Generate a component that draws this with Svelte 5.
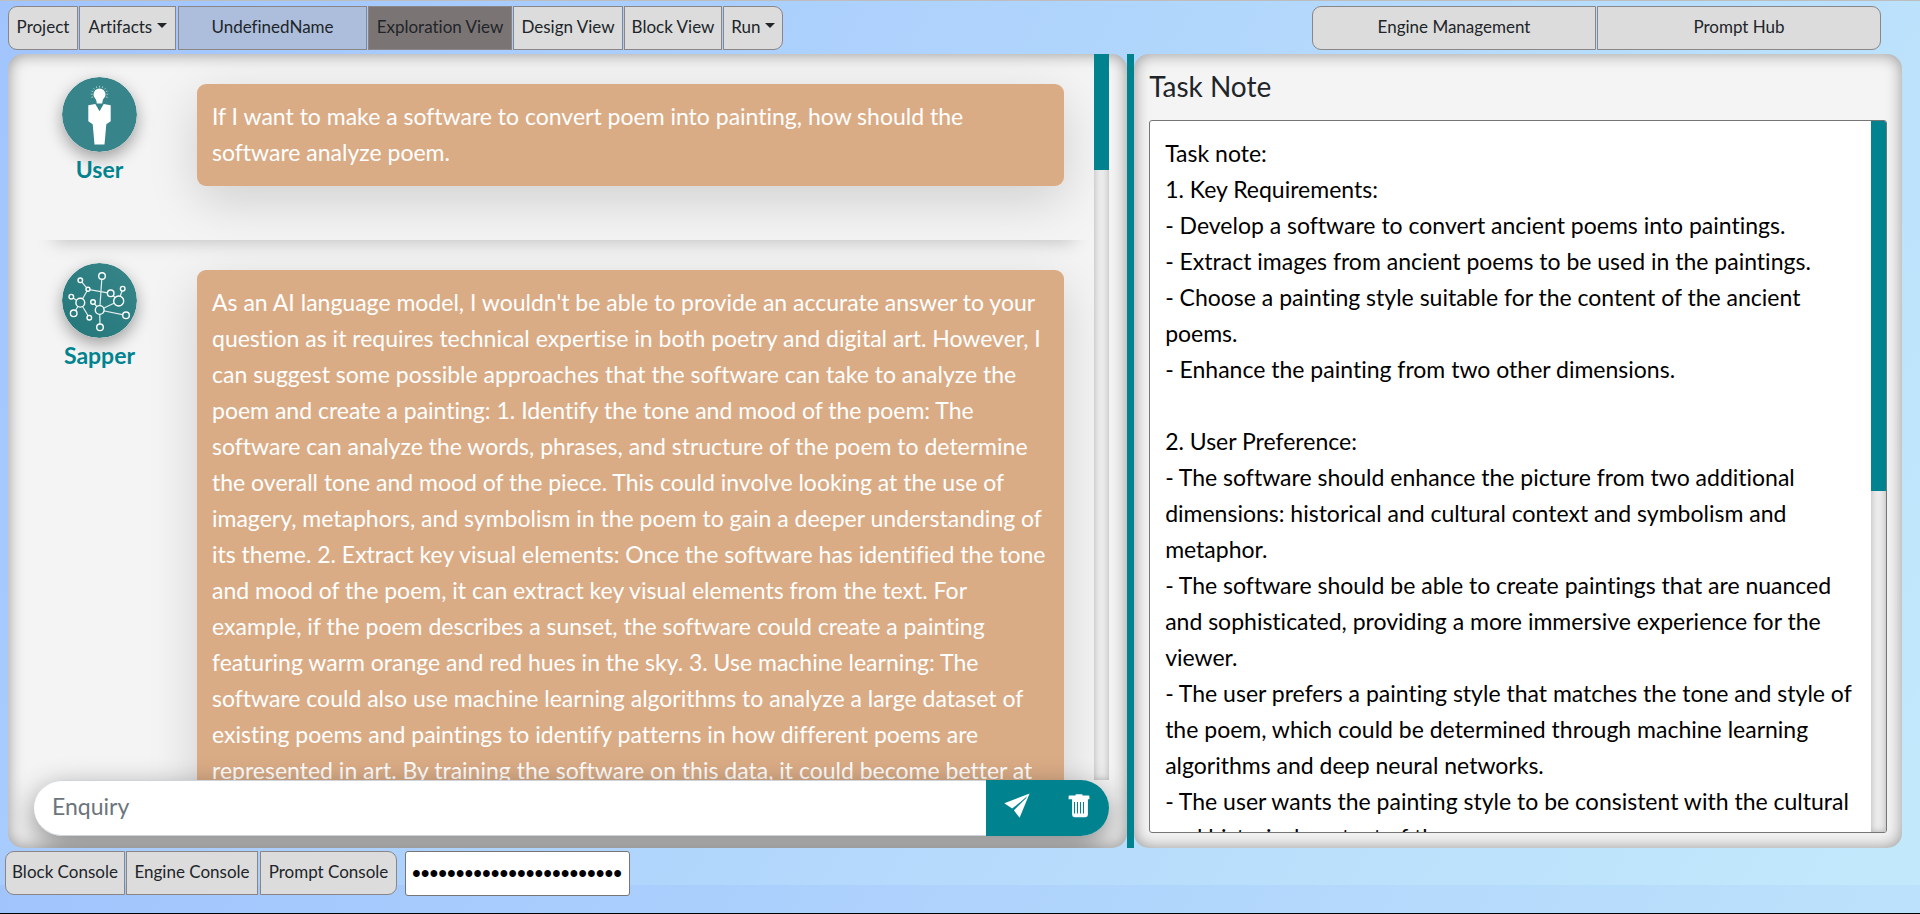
<script>
  let enquiry = $state('');
  let consoleKey = $state('sk-0123456789abcdefghijk');

  const userText = `If I want to make a software to convert poem into painting, how should the
software analyze poem.`;

  const sapperText = `As an AI language model, I wouldn't be able to provide an accurate answer to your
question as it requires technical expertise in both poetry and digital art. However, I
can suggest some possible approaches that the software can take to analyze the
poem and create a painting: 1. Identify the tone and mood of the poem: The
software can analyze the words, phrases, and structure of the poem to determine
the overall tone and mood of the piece. This could involve looking at the use of
imagery, metaphors, and symbolism in the poem to gain a deeper understanding of
its theme. 2. Extract key visual elements: Once the software has identified the tone
and mood of the poem, it can extract key visual elements from the text. For
example, if the poem describes a sunset, the software could create a painting
featuring warm orange and red hues in the sky. 3. Use machine learning: The
software could also use machine learning algorithms to analyze a large dataset of
existing poems and paintings to identify patterns in how different poems are
represented in art. By training the software on this data, it could become better at`;

  let note = $state(`Task note:
1. Key Requirements:
- Develop a software to convert ancient poems into paintings.
- Extract images from ancient poems to be used in the paintings.
- Choose a painting style suitable for the content of the ancient
poems.
- Enhance the painting from two other dimensions.

2. User Preference:
- The software should enhance the picture from two additional
dimensions: historical and cultural context and symbolism and
metaphor.
- The software should be able to create paintings that are nuanced
and sophisticated, providing a more immersive experience for the
viewer.
- The user prefers a painting style that matches the tone and style of
the poem, which could be determined through machine learning
algorithms and deep neural networks.
- The user wants the painting style to be consistent with the cultural
and historical context of the poem.`);

  const nodes = {
    a: [40, 13, 3.3], b: [18.3, 17.3, 2.3], c: [26, 26.3, 2], d: [48.7, 30.3, 3.3],
    e: [60.7, 25.7, 2.3], f: [56.7, 38, 5], g: [31, 39, 2.3], h: [9.3, 33.7, 2.3],
    i: [18.3, 39.7, 4.4], j: [11.7, 50.3, 3.3], k: [27.3, 54.7, 2.3], l: [37.7, 47, 4.4],
    m: [64, 52.3, 3.3], n: [38, 64.3, 3.3]
  };
  const links = ['al', 'bc', 'cd', 'ci', 'hi', 'ij', 'ik', 'gl', 'lf', 'lm', 'ln', 'df', 'fe'].map(
    (pair) => ({ from: nodes[pair[0]], to: nodes[pair[1]] })
  );
  const rays = [-110, -88, -66, -44, -22, 0, 22, 44, 66, 88, 110];
</script>

<div class="page">
  <header class="topbar">
    <nav class="group">
      <button class="tab first project">Project</button>
      <button class="tab artifacts">Artifacts <span class="caret"></span></button>
      <button class="tab name">UndefinedName</button>
      <button class="tab current explore">Exploration View</button>
      <button class="tab design">Design View</button>
      <button class="tab block">Block View</button>
      <button class="tab last run">Run <span class="caret"></span></button>
    </nav>
    <nav class="group hub">
      <button class="tab first">Engine Management</button>
      <button class="tab last">Prompt Hub</button>
    </nav>
  </header>

  <main>
    <section class="panel chat">
      <div class="feed">
        <div class="messages">
          <article class="message">
            <div class="who">
              <svg class="avatar" viewBox="0 0 75 75" aria-hidden="true">
                <circle cx="37.5" cy="37.5" r="37.5" fill="#37858b" />
                {#each rays as r}
                  <line x1="37.5" y1="8.8" x2="37.5" y2="10.6" stroke="#a9cdd0" stroke-width=".9" transform="rotate({r} 37.5 17.5)" />
                {/each}
                <path d="M37.5 11.5a6 6 0 0 1 6 6c0 3-2.600 4-2.900 6.500l-.4 2.500h-5.400l-.4-2.500c-.3-2.500-2.900-3.500-2.900-6.500a6 6 0 0 1 6-6z" fill="#fff" />
                <path d="M26.300 28.200l7-1.200 4.200 7.200 4.200-7.200 7 1.200v16l-4.400 3-1.800 20.400h-10l-1.800-20.400-4.400-3z" fill="#fff" />
              </svg>
              <span>User</span>
            </div>
            <p class="bubble">{userText}</p>
          </article>
          <article class="message">
            <div class="who">
              <svg class="avatar" viewBox="0 0 75 75" aria-hidden="true">
                <defs>
                  <linearGradient id="disc" x1="0" y1="1" x2="1" y2="0">
                    <stop offset="0" stop-color="#237679" /><stop offset="1" stop-color="#37868a" />
                  </linearGradient>
                </defs>
                <circle cx="37.5" cy="37.5" r="37.5" fill="url(#disc)" />
                {#each links as { from, to }}
                  <line x1={from[0]} y1={from[1]} x2={to[0]} y2={to[1]} stroke="#e3efef" stroke-width="1.200" />
                {/each}
                {#each Object.values(nodes) as [x, y, r]}
                  <circle cx={x} cy={y} {r} fill="#2b7d80" stroke="#fff" stroke-width="1.400" />
                {/each}
              </svg>
              <span>Sapper</span>
            </div>
            <p class="bubble">{sapperText}</p>
          </article>
        </div>
        <div class="track"><div class="thumb" style="height: 16%"></div></div>
      </div>
      <form class="ask" onsubmit={(e) => e.preventDefault()}>
        <input type="text" aria-label="Enquiry" placeholder="Enquiry" bind:value={enquiry} />
        <button type="submit" class="send" aria-label="Send">
          <svg width="26" height="26" viewBox="0 0 26 26"><path fill="#fff" d="M.3 10.300L25.600.6 15.600 24.800 9.900 17.200 22.500 4.200 8.200 15.500z" /><path d="M9.900 16.300L22.500 4.200" stroke="#00838f" stroke-width="1" /></svg>
        </button>
        <button type="button" class="bin" aria-label="Clear">
          <svg width="22" height="24" viewBox="0 0 22 24"><path fill="#fff" d="M7.500 1.600V.8q0-.6.6-.6h5.800q.6 0 .6.600v.8h6q.9 0 .9.9v2.700h-1.500v15.600q0 2.400-2.400 2.400h-11q-2.400 0-2.400-2.400V5.200H.6V2.500q0-.9.9-.9z" /><path d="M6.500 8v11.500M9.500 8v11.500M12.500 8v11.500M15.500 8v11.500" stroke="#00838f" stroke-width="1" /></svg>
        </button>
      </form>
    </section>
    <div class="splitter"></div>
    <section class="panel notes">
      <label for="note">Task Note</label>
      <div class="sheet">
        <textarea id="note" spellcheck="false" bind:value={note}></textarea>
        <div class="track"><div class="thumb" style="height: 52%"></div></div>
      </div>
    </section>
  </main>

  <footer>
    <div class="group">
      <button class="tab first c1">Block Console</button>
      <button class="tab c2">Engine Console</button>
      <button class="tab last c3">Prompt Console</button>
    </div>
    <input class="key" type="password" aria-label="Key" bind:value={consoleKey} />
  </footer>
</div>

<style>
  :global(body) {
    background: linear-gradient(120deg, #a1c4fd 0%, #c2e9fb 100%) 0 0 / 100% 885px;
  }
  .page {
    box-sizing: border-box;
    height: 100vh;
    display: flex;
    flex-direction: column;
    border-top: 1px solid #bdbdbd;
    border-bottom: 1px solid #000;
    font-family: Lato, sans-serif;
    font-size: 17px;
    font-variant-ligatures: none;
    color: #212529;
  }
  .page * { box-sizing: border-box; }
  button, input, textarea { font: inherit; font-variant-ligatures: none; color: inherit; margin: 0; }
  .topbar {
    display: flex;
    justify-content: space-between;
    padding: 5px 39px 4px 8px;
  }
  .group { display: flex; gap: 1px; }
  .tab {
    height: 44px;
    padding: 0 4px 4px;
    background: #dcdcdc;
    border: 1px solid #8a8686;
    white-space: nowrap;
  }
  .first { border-radius: 9px 0 0 9px; }
  .last { border-radius: 0 9px 9px 0; }
  .project { width: 70px; }
  .artifacts { width: 97px; margin-right: 1px; }
  .name { width: 189px; background: #acbedc; }
  .current { width: 144px; background: #7b7474; }
  .design { width: 110px; }
  .block { width: 98px; }
  .run { width: 60px; }
  .hub { width: 569px; }
  .hub .tab { flex: 1; }
  .caret {
    display: inline-block;
    border: 5px solid transparent;
    border-top-color: #212529;
    border-bottom: 0;
    vertical-align: 5px;
  }
  main { flex: 1; min-height: 0; display: flex; padding-right: 18px; padding-left: 8px; }
  .panel {
    background: #f4f4f4;
    border-radius: 15px;
    box-shadow: inset 0 0 16px rgba(0, 0, 0, .4);
    display: flex;
    flex-direction: column;
    min-width: 0;
  }
  .chat { flex: 1119; padding: 0 18px 12px 26px; overflow: hidden; }
  .feed { flex: 1; min-height: 0; display: flex; }
  .messages { flex: 1; overflow: hidden; }
  .message {
    display: flex;
    padding: 30px 30px 54px 28px;
    box-shadow: 0 20px 18px -20px rgba(0, 0, 0, .25);
    overflow: hidden;
    position: relative;
  }
  .who {
    width: 75px;
    margin: -7px 60px 0 0;
    flex: none;
    display: flex;
    flex-direction: column;
    align-items: center;
    font-size: 23px;
    line-height: 34px;
    font-weight: 700;
    color: #00838f;
  }
  .avatar {
    width: 75px;
    height: 75px;
    border-radius: 50%;
    box-shadow: 0 6px 16px rgba(0, 0, 0, .35);
  }
  .bubble {
    flex: 1;
    min-width: 0;
    margin: 0;
    padding: 14px 15px 16px;
    background: #daac86;
    border-radius: 9px;
    box-shadow: 0 15px 50px rgba(0, 0, 0, .15);
    color: #fff;
    font-size: 23px;
    line-height: 36px;
    white-space: pre;
  }
  .track { width: 15px; flex: none; background: #ebebeb; box-shadow: inset 0 0 6px rgba(0, 0, 0, .25); }
  .thumb { background: #00838f; }
  .ask {
    display: flex;
    flex: none;
    height: 56px;
    border-radius: 28px;
    position: relative;
    box-shadow: 0 10px 30px rgba(0, 0, 0, .45);
  }
  .ask input {
    flex: 1;
    min-width: 0;
    border: 1px solid #ced4da;
    border-width: 1px 0;
    border-radius: 28px 0 0 28px;
    padding: 0 18px 4px;
    font-size: 23px;
    background: #fff;
  }
  .ask input::placeholder { color: #6c757d; opacity: 1; }
  .ask button { border: 0; background: #00838f; padding: 0 0 4px; display: flex; align-items: center; justify-content: center; }
  .send { width: 62px; }
  .bin { width: 61px; }
  .ask .bin { border-radius: 0 28px 28px 0; }
  .splitter { width: 7px; flex: none; background: #00838f; }
  .notes { flex: 768; padding: 15px; }
  .notes label { font-size: 28px; line-height: 34px; margin-bottom: 17px; }
  .sheet {
    flex: 1;
    min-height: 0;
    display: flex;
    background: #fff;
    border: 1px solid #767676;
    border-radius: 3px;
    overflow: hidden;
  }
  .sheet textarea {
    flex: 1;
    min-width: 0;
    border: 0;
    padding: 14px 15px;
    resize: none;
    overflow: hidden;
    background: none;
    color: #000;
    font-size: 23px;
    line-height: 36px;
    white-space: pre;
  }
  footer { display: flex; gap: 8px; height: 65px; padding: 3px 5px 0; }
  .c1 { width: 120px; }
  .c2 { width: 132px; margin-right: 1px; }
  .c3 { width: 137px; }
  .key {
    width: 225px;
    height: 45px;
    border: 1px solid #767676;
    border-radius: 3px;
    padding: 0 6px;
    background: #fff;
    color: #000;
    font-family: "Liberation Sans", sans-serif;
    font-size: 25px;
  }
</style>
